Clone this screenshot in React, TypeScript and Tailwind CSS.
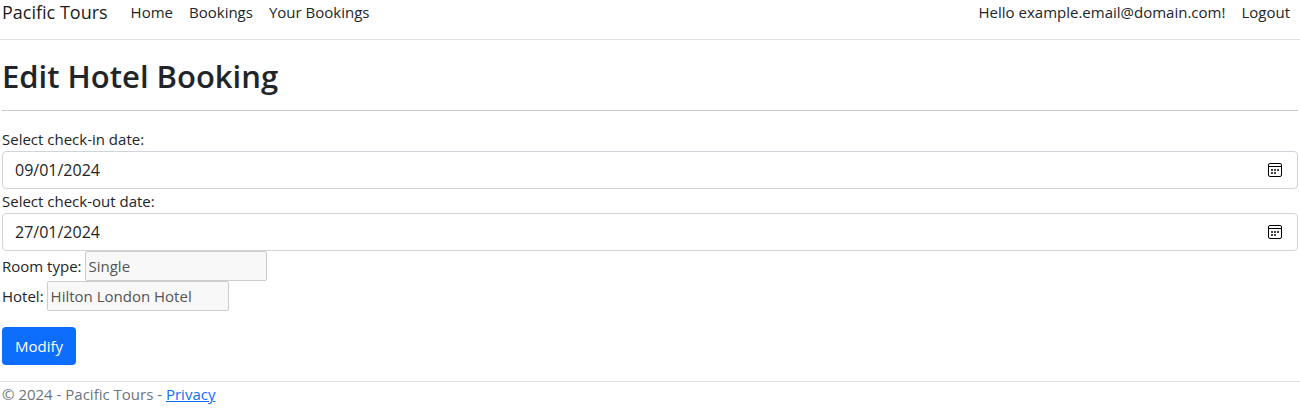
import { useState } from "react";

function CalendarIcon() {
  return (
    <svg width="14" height="14" viewBox="0 0 14 14" aria-hidden="true" shapeRendering="crispEdges">
      <rect x="0.5" y="0.5" width="13" height="13" rx="1.5" fill="none" stroke="#000" shapeRendering="auto" />
      <path d="M1 3.5h12" stroke="#000" />
      <path d="M3 6h2v2H3zM6 6h2v2H6zM9 6h2v2H9zM3 9h2v2H3zM6 9h2v2H6z" fill="#444" />
    </svg>
  );
}

function DateField({ id, label, initial }: { id: string; label: string; initial: string }) {
  const [value, setValue] = useState(initial);
  return (
    <div>
      <label htmlFor={id} className="block">
        {label}
      </label>
      <div className="flex items-center rounded border border-[#ced4da] bg-white py-1.5 pr-3 pl-3">
        <input
          id={id}
          type="text"
          inputMode="numeric"
          value={value}
          onChange={(e) => setValue(e.target.value)}
          className="h-6 min-w-0 flex-1 bg-transparent text-base outline-none"
        />
        <button type="button" aria-label={`Open calendar, ${label}`} className="px-[3px]">
          <CalendarIcon />
        </button>
      </div>
    </div>
  );
}

function FixedField({ id, label, value }: { id: string; label: string; value: string }) {
  return (
    <div className="flex items-center gap-[3px]">
      <label htmlFor={id}>{label}</label>
      <input
        id={id}
        type="text"
        value={value}
        disabled
        className="h-[30px] w-[182px] rounded-xs border border-[#cdcdcd] bg-[#f8f8f8] px-[3px] text-[#545454]"
      />
    </div>
  );
}

export default function App() {
  return (
    <div className="bg-white font-['Open_Sans','Noto_Sans',sans-serif] text-[15px] leading-6 font-normal text-[#212529]">
      <header className="border-b border-[#dee2e6] pb-4">
        <nav className="flex h-[23px] items-center justify-between pr-2.5 pl-0.5">
          <div className="flex items-center gap-[23px]">
            <a href="#" className="text-[18px] font-normal text-[#1a1d20]">
              Pacific Tours
            </a>
            <div className="flex gap-4">
              <a href="#home">Home</a>
              <a href="#bookings">Bookings</a>
              <a href="#your-bookings">Your Bookings</a>
            </div>
          </div>
          <div className="flex gap-4">
            <a href="#account">Hello example.email@domain.com!</a>
            <button type="button">Logout</button>
          </div>
        </nav>
      </header>

      <main className="px-0.5 py-4">
        <h1 className="text-[31px] leading-10 font-semibold">Edit Hotel Booking</h1>
        <hr className="mt-3.5 mb-4 border-[#c7c8c9]" />
        <form onSubmit={(e) => e.preventDefault()}>
          <DateField id="check-in" label="Select check-in date:" initial="09/01/2024" />
          <DateField id="check-out" label="Select check-out date:" initial="27/01/2024" />
          <FixedField id="room-type" label="Room type:" value="Single" />
          <FixedField id="hotel" label="Hotel:" value="Hilton London Hotel" />
          <button type="submit" className="mt-4 block rounded bg-[#0d6efd] px-[13px] py-[7px] text-white">
            Modify
          </button>
        </form>
      </main>

      <footer className="border-t border-[#dee2e6] px-0.5 pb-1 text-[#6c757d]">
        © 2024 - Pacific Tours -{" "}
        <a href="#privacy" className="text-[#0d6efd] underline">
          Privacy
        </a>
      </footer>
    </div>
  );
}
